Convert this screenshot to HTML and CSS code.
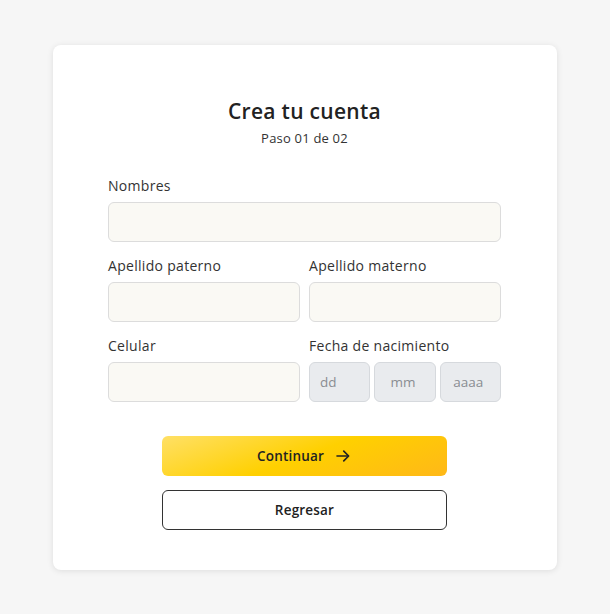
FILE: index.html
```html
<!DOCTYPE html>
<html lang="es">
<head>
<meta charset="utf-8">
<link rel="stylesheet" href="styles.css">
</head>
<body>
<div class="page">
  <div class="card">
    <h1 class="title">Crea tu cuenta</h1>
    <p class="step">Paso 01 de 02</p>
    <form class="form">
      <div class="field">
        <label class="label">Nombres</label>
        <div class="input"></div>
      </div>
      <div class="row">
        <div class="field">
          <label class="label">Apellido paterno</label>
          <div class="input"></div>
        </div>
        <div class="field">
          <label class="label">Apellido materno</label>
          <div class="input"></div>
        </div>
      </div>
      <div class="row">
        <div class="field">
          <label class="label">Celular</label>
          <div class="input"></div>
        </div>
        <div class="field">
          <label class="label">Fecha de nacimiento</label>
          <div class="dates">
            <div class="date">dd</div>
            <div class="date">mm</div>
            <div class="date">aaaa</div>
          </div>
        </div>
      </div>
      <div class="actions">
        <button type="button" class="btn btn-primary">Continuar
          <svg class="arrow" width="18" height="18" viewBox="0 0 24 24" fill="none" stroke="#222" stroke-width="2.2" stroke-linecap="round" stroke-linejoin="round"><path d="M4 12h15"/><path d="M13 5.5l6.5 6.5-6.5 6.5"/></svg>
        </button>
        <button type="button" class="btn btn-secondary">Regresar</button>
      </div>
    </form>
  </div>
</div>
</body>
</html>
```

FILE: styles.css
```css
* { box-sizing: border-box; }
html, body { margin: 0; padding: 0; }
body {
  background: #f6f6f6;
  font-family: "Open Sans", "Noto Sans", sans-serif;
  color: #2b2b2b;
}
.page {
  padding: 45px 53px 44px 53px;
}
.card {
  background: #fff;
  border-radius: 8px;
  box-shadow: 0 1px 6px rgba(0,0,0,0.10);
  padding: 52px 56px 40px 55px;
  height: 525px;
}
.title {
  margin: 0;
  text-align: center;
  font-size: 21px;
  font-weight: 600;
  line-height: 28px;
  letter-spacing: 0.3px;
  color: #222;
}
.step {
  margin: 4px 0 0;
  text-align: center;
  font-size: 13px;
  line-height: 18px;
  letter-spacing: 0.2px;
  color: #333;
}
.form {
  margin-top: 29px;
  display: flex;
  flex-direction: column;
  gap: 14px;
}
.row {
  display: grid;
  grid-template-columns: 1fr 1fr;
  gap: 9px;
}
.field {
  display: flex;
  flex-direction: column;
  gap: 7px;
}
.label {
  font-size: 14px;
  line-height: 19px;
  letter-spacing: 0.3px;
  color: #333;
}
.input {
  height: 40px;
  background: #faf9f4;
  border: 1px solid #dcdcdc;
  border-radius: 6px;
}
.dates {
  display: grid;
  grid-template-columns: 1fr 1fr 1fr;
  gap: 4px;
}
.date {
  height: 40px;
  background: #e9ebee;
  border: 1px solid #d6d9dd;
  border-radius: 6px;
  display: flex;
  align-items: center;
  justify-content: center;
  font-size: 13.5px;
  color: #8a8d92;
  padding-right: 4px;
}
.date:first-child { justify-content: flex-start; padding-left: 10px; }
.actions {
  margin-top: 20px;
  display: flex;
  flex-direction: column;
  align-items: center;
  gap: 14px;
}
.btn {
  width: 285px;
  height: 40px;
  border-radius: 6px;
  font-family: inherit;
  font-size: 13.5px;
  font-weight: 600;
  letter-spacing: 0.2px;
  color: #222;
  display: flex;
  align-items: center;
  justify-content: center;
  gap: 10px;
  cursor: pointer;
}
.btn-primary {
  border: none;
  background: linear-gradient(160deg, #ffe066 0%, #ffd000 50%, #ffb818 100%);
}
.btn-secondary {
  background: #fff;
  border: 1px solid #333;
}
.arrow { display: block; }
```
